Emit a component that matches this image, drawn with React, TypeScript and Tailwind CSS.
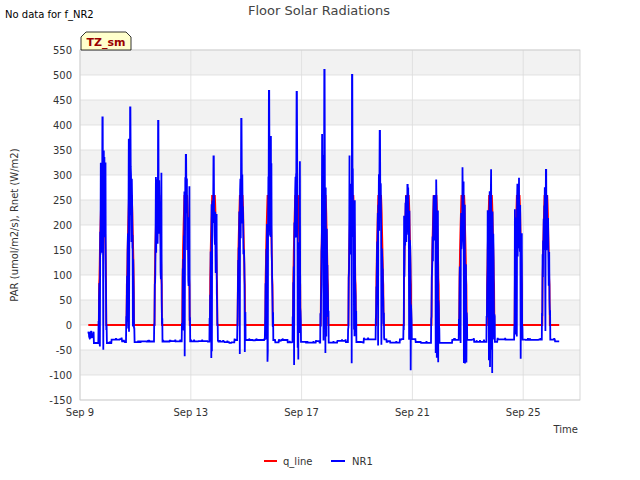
import React from "react";

const X0 = 80, PXD = 27.7;
const yv = (v: number) => 325 - v / 2;
const xd = (d: number) => X0 + d * PXD;

function rng(seed: number) {
  let s = seed;
  return () => {
    s = (s * 16807) % 2147483647;
    return (s - 1) / 2147483646;
  };
}

const peaks = [415, 435, 408, 340, 337, 412, 468, 466, 510, 500, 388, 280, 258, 250, 258, 265, 310];
const mins = [-55, -20, -80, -70, -70, -65, -80, -90, -105, -95, -97, -92, -85, -85, -100, -85, -58];

function build() {
  const r = rng(12345);
  const red: string[] = [];
  const blue: string[] = [];
  let nightLevel = -32;
  for (let d = 0.3; d <= 17.3; d += 0.01) {
    const day = Math.floor(d);
    const f = d - day;
    const i = Math.min(day, 16);
    let b: number, q: number;
    const center = 0.82;
    const dist = Math.abs(f - center);
    if (dist < 0.15 && d < 17.25) {
      const base = 300 * Math.cos((dist / 0.15) * Math.PI / 2);
      q = dist < 0.13 ? Math.min(258, Math.max(80, base)) : 0;
      const spike = r();
      if (dist < 0.01) b = peaks[i];
      else if (spike < 0.12) b = mins[i] * r();
      else if (spike < 0.3) b = peaks[i] * (0.4 + 0.5 * r());
      else b = base * (0.5 + 0.6 * r());
      if (dist > 0.13) b = -10 + 40 * r();
    } else {
      q = 0;
      if (r() < 0.04) nightLevel = -36 + 8 * r();
      b = nightLevel + (r() < 0.05 ? 3 : 0);
      if (d < 0.5) b = -20 + 15 * (r() - 0.5);
    }
    red.push(`${xd(d).toFixed(1)},${yv(q).toFixed(1)}`);
    blue.push(`${xd(d).toFixed(1)},${yv(b).toFixed(1)}`);
  }
  return { red: "M" + red.join("L"), blue: "M" + blue.join("L") };
}

const { red, blue } = build();

export default function App() {
  const yTicks = [];
  for (let v = -150; v <= 550; v += 50) yTicks.push(v);
  const bands = [500, 400, 300, 200, 100, 0, -100];
  const xTicks = [["Sep 9", 0], ["Sep 13", 4], ["Sep 17", 8], ["Sep 21", 12], ["Sep 25", 16]] as const;
  return (
    <div className="w-[640px] h-[480px] bg-white" style={{ fontFamily: "'DejaVu Sans', sans-serif" }}>
      <svg width="640" height="480" className="block">
        <rect x="80" y="50" width="500" height="350" fill="#ffffff" />
        {bands.map((b) => (
          <rect key={b} x="80" y={yv(b + 50)} width="500" height="25" fill="#f2f2f2" />
        ))}
        {yTicks.map((v) => (
          <line key={v} x1="80" x2="580" y1={yv(v)} y2={yv(v)} stroke="#dcdcdc" strokeWidth="0.8" />
        ))}
        {xTicks.map(([l, d]) => (
          <line key={l} x1={xd(d)} x2={xd(d)} y1="50" y2="400" stroke="#dcdcdc" strokeWidth="0.8" />
        ))}
        <rect x="80" y="50" width="500" height="350" fill="none" stroke="#cccccc" strokeWidth="0.8" />
        <clipPath id="c"><rect x="80" y="50" width="500" height="350" /></clipPath>
        <g clipPath="url(#c)">
          <path d={red} fill="none" stroke="#ff0000" strokeWidth="1.8" />
          <path d={blue} fill="none" stroke="#0000ff" strokeWidth="1.8" />
        </g>
        {yTicks.map((v) => (
          <text key={v} x="72" y={yv(v) + 4} fontSize="10" textAnchor="end" fill="#333">{v}</text>
        ))}
        {xTicks.map(([l, d]) => (
          <text key={l} x={xd(d)} y="416" fontSize="10" textAnchor="middle" fill="#333">{l}</text>
        ))}
        <text x="578" y="433" fontSize="10" textAnchor="end" fill="#333">Time</text>
        <text x="18" y="225" fontSize="10" textAnchor="middle" fill="#333" transform="rotate(-90 18 225)">PAR (umol/m2/s), Rnet (W/m2)</text>
        <text x="319" y="15" fontSize="13" textAnchor="middle" fill="#444">Floor Solar Radiations</text>
        <text x="5" y="18" fontSize="10" fill="#000">No data for f_NR2</text>
        <path d="M81,50 L81,37 L86,32 L126,32 L131,37 L131,50 Z" fill="#ffffcc" stroke="#000" strokeWidth="0.8" />
        <text x="106" y="46" fontSize="11" fontWeight="bold" textAnchor="middle" fill="#990000">TZ_sm</text>
        <line x1="264" x2="277" y1="461" y2="461" stroke="#ff0000" strokeWidth="2" />
        <text x="283" y="465" fontSize="10" fill="#333">q_line</text>
        <line x1="331" x2="345" y1="461" y2="461" stroke="#0000ff" strokeWidth="2" />
        <text x="352" y="465" fontSize="10" fill="#333">NR1</text>
      </svg>
    </div>
  );
}
